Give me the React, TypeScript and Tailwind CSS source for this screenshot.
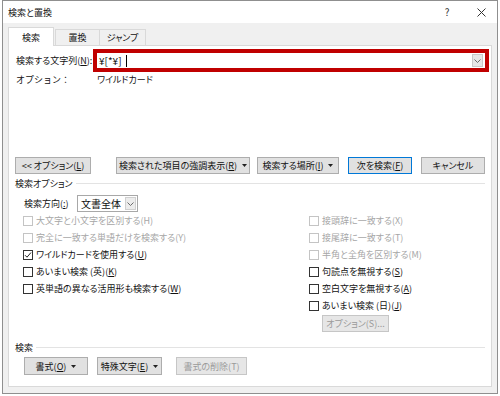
import type { ReactNode } from "react";

const Arrow = () => (
  <svg width="5" height="3" viewBox="0 0 5 3" className="ml-[5px] shrink-0">
    <path d="M0 0h5L2.5 3z" fill="#222" />
  </svg>
);

const Chevron = () => (
  <svg width="7" height="4" viewBox="0 0 7 4">
    <path d="M0.5 0.5L3.5 3.5L6.5 0.5" fill="none" stroke="#6b6b6b" strokeWidth="1" />
  </svg>
);

function Btn({
  children,
  className = "",
  arrow = false,
  disabled = false,
  primary = false,
}: {
  children: ReactNode;
  className?: string;
  arrow?: boolean;
  disabled?: boolean;
  primary?: boolean;
}) {
  return (
    <div
      className={`flex items-center justify-center border ${
        primary ? "border-[#0078d7]" : disabled ? "border-[#c6c6c6]" : "border-[#adadad]"
      } ${disabled ? "bg-[#e6e6e6] text-[#9a9a9a]" : "bg-[#e1e1e1] text-[#111]"} ${className}`}
    >
      <span>{children}</span>
      {arrow && <Arrow />}
    </div>
  );
}

function Check({
  children,
  checked = false,
  disabled = false,
}: {
  children: ReactNode;
  checked?: boolean;
  disabled?: boolean;
}) {
  return (
    <div className="flex h-[17px] items-center">
      <div
        className={`flex h-[10px] w-[10px] shrink-0 items-center justify-center border bg-white ${
          disabled ? "border-[#c4c4c4]" : "border-[#333]"
        }`}
      >
        {checked && (
          <svg width="8" height="8" viewBox="0 0 8 8">
            <path d="M1 4.2L3 6.2L7 1.5" fill="none" stroke="#222" strokeWidth="1" />
          </svg>
        )}
      </div>
      <span className={`ml-[3px] ${disabled ? "text-[#a6a6a6]" : "text-[#111]"}`}>{children}</span>
    </div>
  );
}

function Section({ label }: { label: string }) {
  return (
    <div className="flex h-[12px] items-center">
      <span className="text-[#111]">{label}</span>
      <div className="ml-[3px] h-px flex-1 bg-[#e3e3e3]" />
    </div>
  );
}

export default function App() {
  return (
    <div className="h-[396px] w-[500px] bg-white font-['Noto_Sans_CJK_JP',sans-serif] text-[9px] leading-none [font-feature-settings:'palt']">
      <div className="ml-[2px] flex h-[394px] w-[496px] flex-col border border-[#8f8f8f]">
        {/* タイトル */}
        <div className="flex h-[22px] items-center bg-white pl-[5px] text-[#111]">
          <span>検索と置換</span>
          <div className="ml-auto flex items-center gap-[4px] pr-[1px]">
            <span className="flex w-[30px] justify-center text-[10px] text-[#333]">?</span>
            <span className="flex w-[30px] justify-center">
              <svg width="9" height="9" viewBox="0 0 9 9">
                <path d="M0.5 0.5L8.5 8.5M8.5 0.5L0.5 8.5" stroke="#333" strokeWidth="1" />
              </svg>
            </span>
          </div>
        </div>

        <div className="flex h-[370px] flex-col bg-[#f0f0f0] px-[5px] pt-[4px]">
          {/* タブ */}
          <div className="flex h-[18px] items-end">
            <div className="relative z-10 mb-[-1px] flex h-[19px] w-[46px] items-center justify-center border border-b-0 border-[#d9d9d9] bg-white text-[#111]">
              検索
            </div>
            <div className="ml-[1px] flex h-[16px] w-[45px] items-center justify-center border border-b-0 border-[#d9d9d9] text-[#111]">
              置換
            </div>
            <div className="flex h-[16px] w-[46px] items-center justify-center border border-b-0 border-l-0 border-[#d9d9d9] text-[#111]">
              ジャンプ
            </div>
          </div>

          {/* パネル */}
          <div className="flex h-[342px] flex-col border border-[#d9d9d9] bg-white px-[6px]">
            <div className="mr-[-4px] mt-[3px] flex h-[23px] items-center">
              <span className="ml-[1px] w-[77px] text-[#111]">
                検索する文字列(<u>N</u>):
              </span>
              <div className="flex h-[23px] flex-1 items-center border-[4px] border-[#c00000] bg-white pl-[2px] pr-[2px]">
                <span className="text-[10px] text-[#111]">¥[*¥]</span>
                <span className="ml-[4px] h-[12px] w-px bg-black" />
                <div className="ml-auto flex h-[13px] w-[11px] items-center justify-center border border-[#c9c9c9] bg-[#e6e6e6]">
                  <Chevron />
                </div>
              </div>
            </div>

            <div className="mt-[1px] flex h-[12px] items-center text-[#111]">
              <span className="ml-[1px] w-[81px] [font-feature-settings:normal]">オプション：</span>
              <span>ワイルドカード</span>
            </div>

            <div className="mt-[72px] flex h-[17px]">
              <Btn className="w-[76px]">
                &lt;&lt; オプション(<u>L</u>)
              </Btn>
              <Btn className="ml-[25px] w-[134px]" arrow>
                検索された項目の強調表示(<u>R</u>)
              </Btn>
              <Btn className="ml-[7px] w-[82px]" arrow>
                検索する場所(<u>I</u>)
              </Btn>
              <Btn className="ml-[9px] w-[64px]" primary>
                次を検索(<u>F</u>)
              </Btn>
              <Btn className="ml-[9px] w-[64px]">キャンセル</Btn>
            </div>

            <div className="mt-[3px]">
              <Section label="検索オプション" />
            </div>

            <div className="mt-[6px] flex h-[17px] items-center">
              <span className="ml-[9px] w-[53px] text-[#111]">
                検索方向(<u>:</u>)
              </span>
              <div className="flex h-[17px] w-[61px] items-center border border-[#a8a8a8] bg-white pl-[3px] pr-[1px]">
                <span className="text-[10px] text-[#111]">文書全体</span>
                <div className="ml-auto flex h-[13px] w-[11px] items-center justify-center border border-[#d0d0d0] bg-[#ececec]">
                  <Chevron />
                </div>
              </div>
            </div>

            <div className="flex">
              <div className="ml-[8px] flex w-[286px] flex-col">
                <Check disabled>大文字と小文字を区別する(H)</Check>
                <Check disabled>完全に一致する単語だけを検索する(Y)</Check>
                <Check checked>
                  ワイルドカードを使用する(<u>U</u>)
                </Check>
                <Check>
                  あいまい検索 (英)(<u>K</u>)
                </Check>
                <Check>
                  英単語の異なる活用形も検索する(<u>W</u>)
                </Check>
              </div>
              <div className="flex flex-col">
                <Check disabled>接頭辞に一致する(X)</Check>
                <Check disabled>接尾辞に一致する(T)</Check>
                <Check disabled>半角と全角を区別する(M)</Check>
                <Check>
                  句読点を無視する(<u>S</u>)
                </Check>
                <Check>
                  空白文字を無視する(<u>A</u>)
                </Check>
                <Check>
                  あいまい検索 (日)(<u>J</u>)
                </Check>
                <Btn className="ml-[13px] mt-[1px] h-[17px] w-[67px]" disabled>
                  オプション(S)...
                </Btn>
              </div>
            </div>

            <div className="mt-[9px]">
              <Section label="検索" />
            </div>

            <div className="ml-[9px] mt-[4px] flex h-[18px]">
              <Btn className="w-[64px]" arrow>
                書式(<u>O</u>)
              </Btn>
              <Btn className="ml-[9px] w-[65px]" arrow>
                特殊文字(<u>E</u>)
              </Btn>
              <Btn className="ml-[14px] w-[71px]" disabled>
                書式の削除(T)
              </Btn>
            </div>
          </div>
        </div>
      </div>
    </div>
  );
}
